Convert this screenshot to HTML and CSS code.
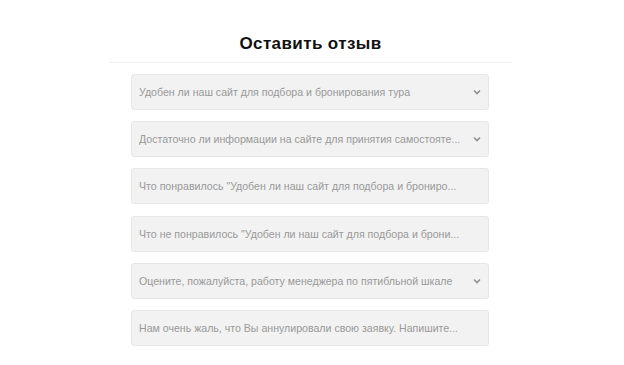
FILE: index.html
```html
<!DOCTYPE html>
<html lang="ru">
<head>
  <meta charset="UTF-8" />
  <title>Оставить отзыв</title>
  <link rel="stylesheet" href="styles.css">
</head>
<body>
  <div class="review">
    <h1 class="review-title">Оставить отзыв</h1>
    <form class="review-form">
      <div class="field select">
        <span class="field-text">Удобен ли наш сайт для подбора и бронирования тура</span>
        <svg class="chevron" width="8" height="6" viewBox="0 0 8 6"><path d="M1 1.5 L4 4.5 L7 1.5" fill="none" stroke="#8f8f8f" stroke-width="1.6"/></svg>
      </div>
      <div class="field select">
        <span class="field-text">Достаточно ли информации на сайте для принятия самостояте...</span>
        <svg class="chevron" width="8" height="6" viewBox="0 0 8 6"><path d="M1 1.5 L4 4.5 L7 1.5" fill="none" stroke="#8f8f8f" stroke-width="1.6"/></svg>
      </div>
      <div class="field">
        <span class="field-text">Что понравилось "Удобен ли наш сайт для подбора и брониро...</span>
      </div>
      <div class="field">
        <span class="field-text">Что не понравилось "Удобен ли наш сайт для подбора и брони...</span>
      </div>
      <div class="field select">
        <span class="field-text">Оцените, пожалуйста, работу менеджера по пятибльной шкале</span>
        <svg class="chevron" width="8" height="6" viewBox="0 0 8 6"><path d="M1 1.5 L4 4.5 L7 1.5" fill="none" stroke="#8f8f8f" stroke-width="1.6"/></svg>
      </div>
      <div class="field">
        <span class="field-text">Нам очень жаль, что Вы аннулировали свою заявку. Напишите...</span>
      </div>
    </form>
  </div>
</body>
</html>
```

FILE: styles.css
```css
* { box-sizing: border-box; margin: 0; padding: 0; }
body { font-family: "Liberation Sans", Arial, sans-serif; background: #fff; padding-right: 3px; }

/* Заголовок */
.review { width: 403px; margin: 0 auto; padding-top: 33px; }
.review-title { text-align: center; font-size: 17px; font-weight: bold; color: #111; letter-spacing: 0.4px; line-height: 22px; padding-bottom: 7px; border-bottom: 1px solid #f0f0f0; }

/* Поля формы */
.review-form { display: flex; flex-direction: column; gap: 11.2px; padding: 11px 23px 0 22px; }
.field { display: flex; align-items: center; height: 36px; padding: 0 7px 0 7px; background: #f2f2f2; border: 1px solid #e6e6e6; border-radius: 3px; }
.field-text { flex: 1; font-size: 10.6px; color: #999; white-space: nowrap; overflow: hidden; text-overflow: ellipsis; }
.select .field-text { padding-right: 4px; }
.chevron { flex: none; }
```
